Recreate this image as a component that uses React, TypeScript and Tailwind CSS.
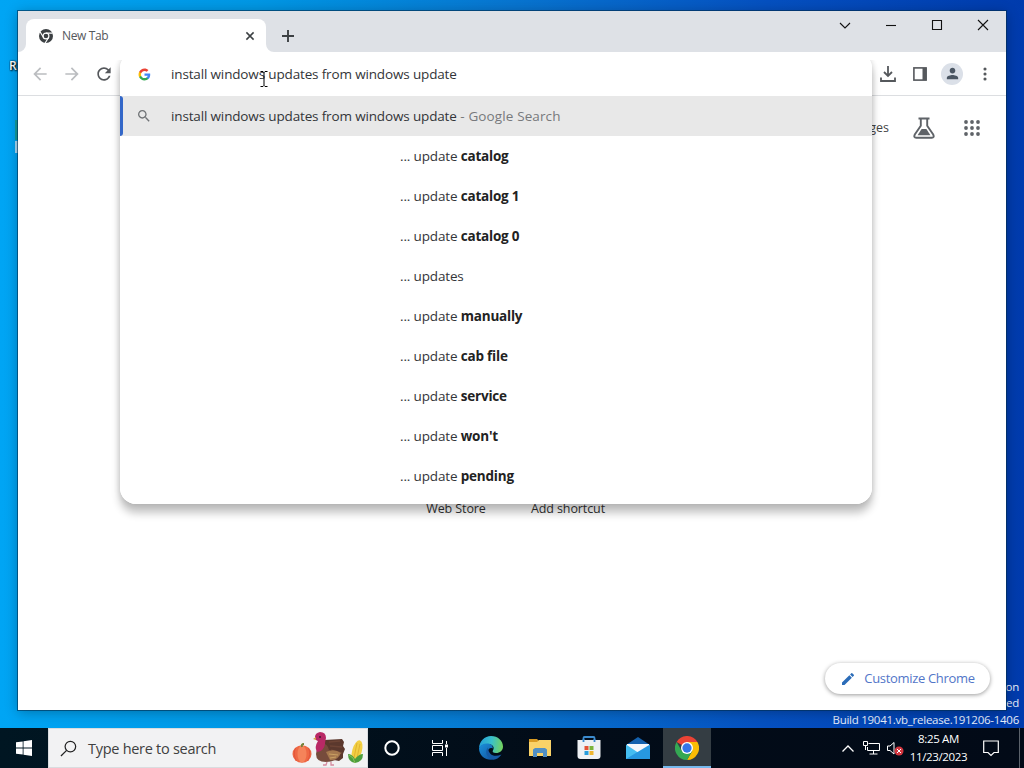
import type { ReactNode } from "react";

interface IconProps {
  d: string;
  className?: string;
}

function MaterialIcon({ d, className }: IconProps) {
  return (
    <svg viewBox="0 0 24 24" fill="currentColor" className={className}>
      <path d={d} />
    </svg>
  );
}

const PATHS = {
  back: "M20 11H7.83l5.59-5.59L12 4l-8 8 8 8 1.41-1.41L7.83 13H20v-2z",
  forward: "M12 4l-1.41 1.41L16.17 11H4v2h12.17l-5.58 5.59L12 20l8-8z",
  reload:
    "M17.65 6.35C16.2 4.9 14.21 4 12 4c-4.42 0-7.99 3.58-7.99 8s3.57 8 7.99 8c3.73 0 6.84-2.55 7.73-6h-2.08c-.82 2.33-3.04 4-5.65 4-3.31 0-6-2.69-6-6s2.69-6 6-6c1.66 0 3.14.69 4.22 1.78L13 11h7V4l-2.35 2.35z",
  search:
    "M15.5 14h-.79l-.28-.27C15.41 12.59 16 11.11 16 9.5 16 5.91 13.09 3 9.5 3S3 5.91 3 9.5 5.91 16 9.5 16c1.61 0 3.09-.59 4.23-1.57l.27.28v.79l5 4.99L20.49 19l-4.99-5zm-6 0C7.01 14 5 11.99 5 9.5S7.01 5 9.5 5 14 7.01 14 9.5 11.99 14 9.5 14z",
  person:
    "M12 12c2.21 0 4-1.79 4-4s-1.79-4-4-4-4 1.79-4 4 1.79 4 4 4zm0 2c-2.67 0-8 1.34-8 4v2h16v-2c0-2.66-5.33-4-8-4z",
  edit: "M3 17.25V21h3.75L17.81 9.94l-3.75-3.75L3 17.25zM20.71 7.04a.996.996 0 0 0 0-1.41l-2.34-2.34a.996.996 0 0 0-1.41 0l-1.83 1.83 3.75 3.75 1.83-1.83z",
};

const suggestions = [
  { text: "update", bold: "catalog" },
  { text: "update", bold: "catalog 1" },
  { text: "update", bold: "catalog 0" },
  { text: "updates", bold: "" },
  { text: "update", bold: "manually" },
  { text: "update", bold: "cab file" },
  { text: "update", bold: "service" },
  { text: "update", bold: "won't" },
  { text: "update", bold: "pending" },
];

function GoogleLogo() {
  return (
    <svg viewBox="0 0 24 24" className="size-[13px]">
      <path fill="#4285f4" d="M22.56 12.25c0-.78-.07-1.53-.2-2.25H12v4.26h5.92c-.26 1.37-1.04 2.53-2.21 3.31v2.77h3.57c2.08-1.92 3.28-4.74 3.28-8.09z" />
      <path fill="#34a853" d="M12 23c2.97 0 5.46-.98 7.28-2.66l-3.57-2.77c-.98.66-2.23 1.06-3.71 1.06-2.86 0-5.29-1.93-6.16-4.53H2.18v2.84C3.99 20.53 7.7 23 12 23z" />
      <path fill="#fbbc05" d="M5.84 14.09c-.22-.66-.35-1.36-.35-2.09s.13-1.43.35-2.09V7.07H2.18C1.43 8.55 1 10.22 1 12s.43 3.45 1.18 4.93l2.85-2.22.81-.62z" />
      <path fill="#ea4335" d="M12 5.38c1.62 0 3.06.56 4.21 1.64l3.15-3.15C17.45 2.09 14.97 1 12 1 7.7 1 3.99 3.47 2.18 7.07l3.66 2.84c.87-2.6 3.3-4.53 6.16-4.53z" />
    </svg>
  );
}

function TabFavicon() {
  return (
    <svg viewBox="0 0 24 24" className="size-[14px]">
      <circle cx="12" cy="12" r="12" fill="#3c4043" />
      <circle cx="12" cy="12" r="5" fill="none" stroke="#fff" strokeWidth="2" />
      <path d="M12 7h11.500M7.700 14.500L1.800 4.700M16.300 14.500L10.600 24" stroke="#fff" strokeWidth="2" />
    </svg>
  );
}

function ChromeLogo() {
  return (
    <svg viewBox="0 0 48 48" className="size-6">
      <path fill="#ea4335" d="M24 24L3.2 12A24 24 0 0 1 44.8 12H24z" />
      <path fill="#fbbc04" d="M24 12h20.8A24 24 0 0 1 24 48l10.4-18z" />
      <path fill="#34a853" d="M3.2 12A24 24 0 0 0 24 48l10.4-18H13.6z" />
      <circle cx="24" cy="24" r="12" fill="#fff" />
      <circle cx="24" cy="24" r="9.3" fill="#3475e8" />
    </svg>
  );
}

function TabStrip() {
  return (
    <div className="flex h-[41px] shrink-0 bg-[#dee1e6]">
      <div className="flex w-[248px] items-end">
        <svg viewBox="0 0 8 8" className="size-2 shrink-0">
          <path d="M8 0v8H0a8 8 0 0 0 8-8z" fill="#fff" />
        </svg>
        <div className="flex h-[33px] w-[240px] items-center rounded-t-lg bg-white pr-[11px] pl-[13px]">
          <TabFavicon />
          <span className="ml-[9px] flex-1 text-[12px] tracking-[-0.35px] text-[#55585c]">New Tab</span>
          <svg viewBox="0 0 10 10" className="size-[10px]">
            <path d="M1.4 1.4l7.2 7.2M8.600 1.400L1.400 8.600" stroke="#3c4043" strokeWidth="1.5" />
          </svg>
        </div>
      </div>
      <div className="flex flex-1 items-end">
        <svg viewBox="0 0 8 8" className="size-2 shrink-0">
          <path d="M0 0v8h8a8 8 0 0 1-8-8z" fill="#fff" />
        </svg>
        <svg viewBox="0 0 12 12" className="mb-[10px] ml-[8px] size-3">
          <path d="M6 0v12M0 6h12" stroke="#3c4043" strokeWidth="1.9" />
        </svg>
      </div>
      <div className="flex h-[28px] text-[#111]">
        <WindowButton>
          <path d="M1 4l5 5 5-5" />
        </WindowButton>
        <WindowButton>
          <path d="M1 6.5h10" />
        </WindowButton>
        <WindowButton>
          <path d="M1.5 1.5h9v9h-9z" />
        </WindowButton>
        <WindowButton>
          <path d="M1 1l10 10M11 1L1 11" />
        </WindowButton>
      </div>
    </div>
  );
}

function WindowButton({ children }: { children: ReactNode }) {
  return (
    <button className="flex w-[46px] items-center justify-center">
      <svg viewBox="0 0 12 12" fill="none" stroke="currentColor" strokeWidth="1.1" className="size-3">
        {children}
      </svg>
    </button>
  );
}

function Toolbar() {
  return (
    <div className="flex h-[44px] shrink-0 items-center border-b border-[#dcdee1] bg-white px-3 text-[#55585c]">
      <MaterialIcon d={PATHS.back} className="size-5 text-[#bbbdc0]" />
      <MaterialIcon d={PATHS.forward} className="ml-3 size-5 text-[#bbbdc0]" />
      <MaterialIcon d={PATHS.reload} className="ml-3 size-5" />
      <div className="flex-1" />
      <svg viewBox="0 0 16 16" fill="none" stroke="currentColor" className="size-4">
        <path d="M8 0v9.5M4 6l4 4 4-4M1 11.5V15h14v-3.5" strokeWidth="1.8" />
      </svg>
      <svg viewBox="0 0 16 16" className="ml-4 size-4" fill="none" stroke="currentColor">
        <rect x="1.9" y="1.9" width="12.2" height="12.2" strokeWidth="1.6" />
        <path d="M12.500 2v12" strokeWidth="4" />
      </svg>
      <div className="ml-[13px] flex size-[22px] items-center justify-center rounded-full bg-[#dbe0e8]">
        <MaterialIcon d={PATHS.person} className="size-[17px] text-[#4b5663]" />
      </div>
      <svg viewBox="0 0 4 14" fill="currentColor" className="mr-[7px] ml-[20px] h-[14px] w-1">
        <circle cx="2" cy="2" r="1.55" />
        <circle cx="2" cy="7" r="1.55" />
        <circle cx="2" cy="12" r="1.55" />
      </svg>
    </div>
  );
}

function NewTabPage() {
  return (
    <div className="flex flex-1 flex-col bg-white">
      <div className="flex h-16 items-center justify-end pr-[25px] text-[12.5px] text-[#444]">
        <span>Images</span>
        <svg viewBox="0 0 22 22" fill="none" stroke="#5f6368" className="ml-6 size-[22px]">
          <path d="M5.500 1.500h11M7.800 2v6.800L1.800 17.500q-1.500 3 1.500 3.300h15.400q3-.3 1.500-3.300l-6-8.700V2" strokeWidth="1.900" />
          <path d="M8.600 12h4.800l4 6.200H4.600z" fill="#5f6368" stroke="none" />
        </svg>
        <svg viewBox="0 0 18 18" fill="#5f6368" className="ml-[28px] size-[18px]">
          {[3, 9, 15].map((y) => [3, 9, 15].map((x) => <circle key={`${x}-${y}`} cx={x} cy={y} r="1.9" />))}
        </svg>
      </div>
      <div className="flex-1" />
      <div className="mb-[191px] grid grid-cols-[112px_112px] justify-center text-center text-[12.5px] leading-5 tracking-[-0.1px] text-[#333]">
        <span>Web Store</span>
        <span>Add shortcut</span>
      </div>
    </div>
  );
}

function Omnibox() {
  return (
    <div className="absolute top-[41px] left-[102px] w-[752px]">
      <div className="absolute inset-0 rounded-2xl shadow-[0_9px_8px_rgba(0,0,0,0.24),0_0_6px_rgba(0,0,0,0.14)] [clip-path:inset(8px_-14px_-24px_-14px)]" />
      <div className="relative h-[452px] overflow-hidden rounded-2xl bg-white text-[13.5px] text-[#333538]">
        <div className="flex h-11 items-center pl-[18px]">
          <GoogleLogo />
          <span className="ml-5 tracking-[-0.15px]">install windows updates from windows update</span>
        </div>
        <div className="flex h-10 items-center bg-[#e8e8e8]">
          <div className="h-full w-[3px] rounded-r-[3px] bg-[#3367c8]" />
          <MaterialIcon d={PATHS.search} className="ml-[13px] size-4 text-[#707376]" />
          <span className="ml-[19px] tracking-[-0.15px] whitespace-pre">
            install windows updates from windows update
            <span className="tracking-[0.12px] text-[#77797c]"> - Google Search</span>
          </span>
        </div>
        {suggestions.map((item) => (
          <div key={item.text + item.bold} className="flex h-10 items-center pl-[280px] tracking-[-0.15px] whitespace-pre">
            ... {item.text} <b className="tracking-[-0.2px] text-[#222]">{item.bold}</b>
          </div>
        ))}
      </div>
    </div>
  );
}

function ChromeWindow() {
  return (
    <div className="absolute top-[11px] left-[18px] flex h-[699px] w-[988px] flex-col shadow-[0_0_0_1px_rgba(0,45,80,0.6),0_2px_12px_rgba(0,0,0,0.3)]">
      <TabStrip />
      <Toolbar />
      <NewTabPage />
      <Omnibox />
      <button className="absolute right-4 bottom-4 flex h-[31px] w-[165px] items-center justify-center rounded-full bg-white pt-px text-[13px] tracking-[-0.32px] text-[#5276c8] shadow-[0_1px_4px_rgba(0,0,0,0.4)]">
        <MaterialIcon d={PATHS.edit} className="mr-2 size-4 text-[#2b6cb8]" />
        <span>Customize Chrome</span>
      </button>
    </div>
  );
}

function HolidayArt() {
  return (
    <svg viewBox="0 0 74 40" className="mr-[2px] h-10 w-[74px]">
      <ellipse cx="11" cy="26" rx="9.5" ry="8.8" fill="#ee6844" />
      <ellipse cx="11" cy="26" rx="4.5" ry="8.5" fill="#f5835a" />
      <path d="M4.500 20q-3 6 1 13M17.500 20q3 6-1 13" stroke="#e2553b" fill="none" />
      <path d="M11 19q-1-3 2-3" stroke="#748138" strokeWidth="2" fill="none" />
      <path d="M33 12l18-1 2 3-1 4 2 3-2 5v4l-4 3-15-3z" fill="#5b382d" />
      <path d="M38 14l11-1M39 18l12 1M40 22l11 3" stroke="#6d4435" strokeWidth="1.500" />
      <path d="M31 15q6 1 7 7l11 5q-3 7-14 7-10 0-10-8 0-5 6-11z" fill="#764b3c" />
      <path d="M35 24q8-4 15 1-4 8-11 7z" fill="#a5784e" />
      <path d="M38 26l9 1M39 30l6-1" stroke="#caa063" />
      <path d="M26 24q-3-5 1-11-3-1-3-4 0-4 5-5 6 0 6 6-1 4-1 6-1 7-8 8z" fill="#b82965" />
      <circle cx="29" cy="9" r="1" fill="#42142b" />
      <path d="M25 9l-3 2 3 1z" fill="#d99a45" />
      <path d="M36 34l-1 3h-3M40 34v3h3" stroke="#d68ba0" fill="none" strokeWidth="1.3" />
      <ellipse cx="66" cy="23" rx="4.800" ry="11" transform="rotate(16 66 23)" fill="#f2cf43" />
      <path d="M66 15l-3 15M69 16l-3 14" stroke="#dcab29" strokeWidth=".8" />
      <path d="M57 26q4 0 7 5 4-5 8-5 0 8-8 9-7-1-7-9z" fill="#4c9e3d" />
      <path d="M58 27q5 2 6 8" stroke="#8ac355" fill="none" />
    </svg>
  );
}

function TaskbarItem({ active, children }: { active?: boolean; children: ReactNode }) {
  return (
    <div className={active ? "flex w-12 items-center justify-center border-b-2 border-[#76b9ed] bg-[#343d43] pt-0.5" : "flex w-12 items-center justify-center"}>
      {children}
    </div>
  );
}

function Taskbar() {
  return (
    <div className="flex h-10 shrink-0 bg-[linear-gradient(90deg,#001622,#020c18_55%,#020a17)] text-white">
      <div className="flex w-12 items-center justify-center">
        <svg viewBox="0 0 16 16" fill="#fff" className="size-4">
          <path d="M0 2.300l6.700-.9v6.200H0zM7.500 1.300L16 0v7.600H7.500zM0 8.400h6.700v6.200L0 13.700zM7.500 8.400H16V16l-8.500-1.300z" />
        </svg>
      </div>
      <div className="flex w-[320px] items-center border border-[#d9dcdf] bg-[#f2f2f3] text-[#404040]">
        <svg viewBox="0 0 18 18" fill="none" stroke="#222" strokeWidth="1.3" className="ml-[11px] size-[17px]">
          <circle cx="11" cy="7" r="5.6" />
          <path d="M7 11L1 17" />
        </svg>
        <span className="ml-[11px] flex-1 pt-px text-[14.5px] tracking-[-0.28px]">Type here to search</span>
        <HolidayArt />
      </div>
      <div className="flex">
        <TaskbarItem>
          <svg viewBox="0 0 16 16" className="size-4">
            <circle cx="8" cy="8" r="6.700" fill="none" stroke="#fff" strokeWidth="2" />
          </svg>
        </TaskbarItem>
        <TaskbarItem>
          <svg viewBox="0 0 18 16" fill="none" stroke="#fff" className="h-4 w-[18px]">
            <path d="M1.500 0v3.500h10V0M1.500 16v-3.500h10V16M1.500 5.500h10v5h-10zM15.500 1v3M15.500 8v8" />
            <path d="M14 4.500h3v3h-3z" fill="#fff" stroke="none" />
          </svg>
        </TaskbarItem>
      </div>
      <div className="ml-[3px] flex gap-px">
        <TaskbarItem>
          <svg viewBox="0 0 24 24" className="size-6">
            <defs>
              <linearGradient id="edge-top" x1="0" x2="1" y1=".5" y2=".6">
                <stop offset="0" stopColor="#249fd8" />
                <stop offset=".5" stopColor="#39c0cb" />
                <stop offset="1" stopColor="#76d35a" />
              </linearGradient>
              <linearGradient id="edge-bottom" x1="0" x2="1" y1="0" y2="1">
                <stop offset="0" stopColor="#1b91dc" />
                <stop offset="1" stopColor="#114f9a" />
              </linearGradient>
            </defs>
            <path d="M0 12C.5 5 5.500 0 12 0c7 0 12 5 12 10.500 0 4-3 6.500-7 6.500-3 0-4-1.300-3-2.700 2-3-.5-6.300-5-6.300-4 0-8 2-9 4z" fill="url(#edge-top)" />
            <path d="M0 12c1-3 4-4.500 8-4.500 4 0 6.500 2.500 5.600 5-2.200-1.500-5 .5-4.600 3.500.5 4 5 7 8.500 6.500C10 26 0 22 0 12z" fill="url(#edge-bottom)" />
            <path d="M9 11.500c-4 4-1 11.500 5.500 12 3 0 6-2 8-5-7 3-13 1-13.500-7z" fill="#155ba6" />
          </svg>
        </TaskbarItem>
        <TaskbarItem>
          <svg viewBox="0 0 22 18" className="h-[18px] w-[22px]">
            <path d="M0 0h8l2 2v3H0z" fill="#d99b22" />
            <path d="M0 3h8l2-2h12v16H0z" fill="#f9d268" />
            <path d="M4 18v-7.500L6 9h10l2 1.500V18h-4v-4H8v4z" fill="#508fc4" />
          </svg>
        </TaskbarItem>
        <TaskbarItem>
          <svg viewBox="0 0 24 24" className="size-6">
            <path d="M6.500 7V2q0-1 1-1h9q1 0 1 1v5" stroke="#3b8bce" strokeWidth="1.800" fill="none" />
            <path d="M.5 4h23v16q0 3-3 3h-17q-3 0-3-3z" fill="#eef1f4" />
            <path d="M6.500 6V3M17.500 6V3" stroke="#3b8bce" strokeWidth="1.800" />
            <path d="M7.500 10h4v4h-4z" fill="#e35335" />
            <path d="M12.500 10h4v4h-4z" fill="#7bb43b" />
            <path d="M7.500 15h4v4h-4z" fill="#279ddd" />
            <path d="M12.500 15h4v4h-4z" fill="#efb62f" />
          </svg>
        </TaskbarItem>
        <TaskbarItem>
          <svg viewBox="0 0 24 22" className="h-[22px] w-6">
            <path d="M0 8l12-8 12 8v5H0z" fill="#1462ae" />
            <path d="M1 7h22v9H1z" fill="#f4f8fb" />
            <path d="M0 7.500l12 8V22H0z" fill="#45bdf0" />
            <path d="M24 7.500L0 22h24z" fill="#2798e0" />
          </svg>
        </TaskbarItem>
        <TaskbarItem active>
          <ChromeLogo />
        </TaskbarItem>
      </div>
      <div className="flex flex-1 items-center justify-end">
        <svg viewBox="0 0 12 7" fill="none" stroke="#fff" strokeWidth="1.300" className="h-[7px] w-3">
          <path d="M.5 6.500L6 1l5.500 5.500" />
        </svg>
        <svg viewBox="0 0 17 14" fill="none" stroke="#fff" className="ml-[9px] h-[14px] w-[17px]">
          <path d="M5.500 2.500h11v7h-12V6M10.500 10v3M6.500 13h8M.5.500h4v4h-4zM2.500 4.500V9" />
        </svg>
        <svg viewBox="0 0 17 15" fill="none" stroke="#fff" className="ml-[7px] h-[15px] w-[17px]">
          <path d="M.5 5h2.500l4-3.500v11.500L3 9.500H.5z" />
          <circle cx="12" cy="10" r="4.500" fill="#d3363f" stroke="none" />
          <path d="M10 8l4 4M14 8l-4 4" />
        </svg>
        <div className="ml-px w-[67px] text-center text-[11.5px] leading-[18px] tracking-[-0.35px]">
          <div>8:25 AM</div>
          <div>11/23/2023</div>
        </div>
        <svg viewBox="0 0 16 17" fill="none" stroke="#fff" strokeWidth="1.200" className="mr-[20px] ml-[11px] h-[17px] w-4">
          <path d="M.7 1h14.600v11.500H11L8 15.500l-3-3H.7z" />
        </svg>
        <div className="h-full w-[5px] border-l border-[#5b626b]" />
      </div>
    </div>
  );
}

function Desktop() {
  return (
    <div className="relative flex-1 bg-[linear-gradient(90deg,#00a5f4_0%,#0097e4_25%,#0875d0_50%,#0550c0_75%,#003bad_100%)]">
      <span className="absolute top-[57px] left-[9px] w-[9px] overflow-hidden text-[12px] font-semibold text-white [text-shadow:0_0_2px_#000,1px_1px_2px_#000]">R</span>
      <span className="absolute top-[141px] left-[15px] h-3 w-1 bg-[#a9d9f4]" />
      <span className="absolute top-[120px] left-[15px] h-5 w-1 bg-[#159e9c]" />
      <div className="absolute right-[5px] bottom-0 text-right text-[11.5px] leading-[16.5px] tracking-[-0.26px] text-[#e6eefa]">
        <div>on</div>
        <div>ed</div>
        <div>Build 19041.vb_release.191206-1406</div>
      </div>
      <ChromeWindow />
      <svg viewBox="0 0 8 16" fill="none" stroke="#000" className="absolute top-[71px] left-[260px] h-4 w-2">
        <path d="M.5.500h2.500l1 1 1-1h2.500M4 1.500v13M.5 15.500h2.500l1-1 1 1h2.500" />
      </svg>
    </div>
  );
}

export default function App() {
  return (
    <div className="flex h-[768px] w-[1024px] flex-col overflow-hidden font-['Open_Sans','Noto_Sans',sans-serif]">
      <Desktop />
      <Taskbar />
    </div>
  );
}
